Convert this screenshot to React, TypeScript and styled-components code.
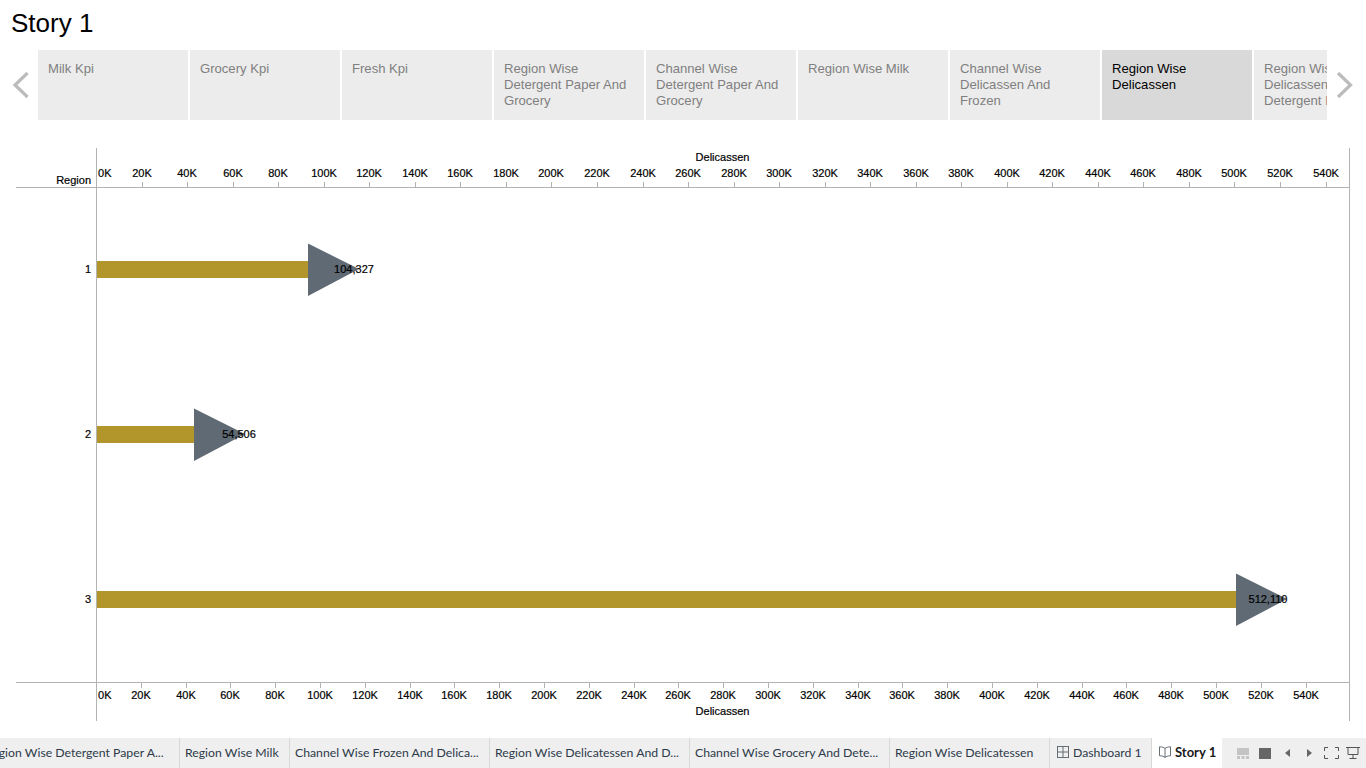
import React from 'react'
import styled, { createGlobalStyle } from 'styled-components'

const GlobalStyle = createGlobalStyle`
  html, body {
    margin: 0;
    padding: 0;
    background: #fff;
    overflow: hidden;
  }
`

const Page = styled.div`
  width: 1366px;
  height: 768px;
  display: flex;
  flex-direction: column;
  font-family: "Liberation Sans", Arial, sans-serif;
  overflow: hidden;
`

const Title = styled.h1`
  margin: 0;
  padding: 8px 0 0 11px;
  height: 50px;
  box-sizing: border-box;
  font-size: 26px;
  line-height: 30px;
  font-weight: 400;
  color: #000;
`

const Navigator = styled.div`
  display: flex;
  align-items: center;
  height: 70px;
  flex: none;
`

const ArrowIcon = styled.svg`
  display: block;
  flex: none;
  fill: none;
  stroke: #bcbcbc;
  stroke-width: 3.2;
`

const PointStrip = styled.div`
  display: flex;
  gap: 2px;
  width: 1289px;
  overflow: hidden;
  flex: none;
`

const Point = styled.div<{ $active?: boolean }>`
  width: 150px;
  height: 70px;
  flex: none;
  box-sizing: border-box;
  padding: 11px 10px 0;
  font-size: 13.1px;
  line-height: 16px;
  background: ${props => (props.$active ? '#d9d9d9' : '#ececec')};
  color: ${props => (props.$active ? '#000' : '#7f7f7f')};
`

const Chart = styled.svg`
  display: block;
  width: 1366px;
  height: 590px;
  margin-top: 28px;
  flex: none;
`

const AxisLine = styled.line`
  stroke: #b3b3b3;
  stroke-width: 1;
`

const ChartLabel = styled.text`
  font-family: "Liberation Sans", Arial, sans-serif;
  font-size: 11px;
  fill: #000;
  stroke: #000;
  stroke-width: 0.2;
`

const TabBar = styled.div`
  display: flex;
  height: 30px;
  background: #efefef;
  flex: none;
  overflow: hidden;
  font-family: Lato, "Open Sans", sans-serif;
  color: #2d3a4a;
`

const Tabs = styled.div`
  display: flex;
  width: 1222px;
  flex: none;
  justify-content: flex-end;
  overflow: hidden;
`

const Tab = styled.div<{ $width: number; $active?: boolean }>`
  width: ${props => props.$width}px;
  flex: none;
  box-sizing: border-box;
  display: flex;
  align-items: center;
  gap: 4px;
  padding: 0 5px 2px;
  white-space: nowrap;
  border-right: 1px solid ${props => (props.$active ? '#fff' : '#d8d8d8')};
  background: ${props => (props.$active ? '#fff' : 'transparent')};
  font-weight: ${props => (props.$active ? 700 : 400)};
  font-size: ${props => (props.$active ? '13px' : '12.25px')};
  color: ${props => (props.$active ? '#1a1a1a' : '#2d3a4a')};
`

const TabIcon = styled.svg`
  display: block;
  flex: none;
  margin-left: 2px;
  fill: none;
  stroke: #666e76;
`

const ViewControls = styled.div`
  display: flex;
  align-items: center;
  padding-left: 15px;
  flex: 1;
`

const Control = styled.svg<{ $gap?: number }>`
  display: block;
  flex: none;
  margin-left: ${props => props.$gap || 0}px;
`

const tabs = [
  { label: 'Region Wise Detergent Paper A...', width: 200 },
  { label: 'Region Wise Milk', width: 110 },
  { label: 'Channel Wise Frozen And Delica...', width: 200 },
  { label: 'Region Wise Delicatessen And D...', width: 200 },
  { label: 'Channel Wise Grocery And Dete...', width: 200 },
  { label: 'Region Wise Delicatessen', width: 160 }
]

const points = [
  'Milk Kpi',
  'Grocery Kpi',
  'Fresh Kpi',
  'Region Wise Detergent Paper And Grocery',
  'Channel Wise Detergent Paper And Grocery',
  'Region Wise Milk',
  'Channel Wise Delicassen And Frozen',
  'Region Wise Delicassen',
  'Region Wise Delicassen And Detergent Paper'
]

const ticks = Array.from({ length: 28 }, (_, i) => i)

const rows = [
  { region: '1', y: 269, baseX: 308, value: '104,327', labelX: 354 },
  { region: '2', y: 434, baseX: 194, value: '54,506', labelX: 239 },
  { region: '3', y: 599, baseX: 1236, value: '512,110', labelX: 1268 }
]

// viewBox starts at y=148 so the chart can use page coordinates
const StoryChart: React.FC = () => (
  <Chart viewBox="0 148 1366 590">
    <AxisLine x1={96.5} y1={148} x2={96.5} y2={721} />
    <AxisLine x1={1349.5} y1={148} x2={1349.5} y2={721} />
    <AxisLine x1={16} y1={187.5} x2={1350} y2={187.5} />
    <AxisLine x1={16} y1={682.5} x2={1350} y2={682.5} />

    <ChartLabel x={722.5} y={161} textAnchor="middle">Delicassen</ChartLabel>
    <ChartLabel x={722.5} y={715} textAnchor="middle">Delicassen</ChartLabel>
    <ChartLabel x={91} y={184} textAnchor="end">Region</ChartLabel>

    {ticks.map(i => {
      const topX = Math.floor(96.6 + i * 45.535)
      const bottomX = Math.floor(96.5 + i * 44.8)
      return (
        <g key={i}>
          {i > 0 && <AxisLine x1={topX + 0.5} y1={182} x2={topX + 0.5} y2={187} />}
          {i > 0 && <AxisLine x1={bottomX + 0.5} y1={683} x2={bottomX + 0.5} y2={688} />}
          <ChartLabel x={i === 0 ? 98 : topX} y={177} textAnchor={i === 0 ? 'start' : 'middle'}>{i * 20}K</ChartLabel>
          <ChartLabel x={i === 0 ? 98 : bottomX} y={699} textAnchor={i === 0 ? 'start' : 'middle'}>{i * 20}K</ChartLabel>
        </g>
      )
    })}

    {rows.map(r => (
      <g key={r.region}>
        <ChartLabel x={91} y={r.y + 4} textAnchor="end">{r.region}</ChartLabel>
        <rect x={97} y={r.y - 8} width={r.baseX - 97} height={17} fill="#b2962c" />
        <polygon
          points={`${r.baseX},${r.y - 25.5} ${r.baseX + 51},${r.y} ${r.baseX},${r.y + 27}`}
          fill="#5f6a74"
        />
        <ChartLabel x={r.labelX} y={r.y + 4} textAnchor="middle">{r.value}</ChartLabel>
      </g>
    ))}
  </Chart>
)

const App: React.FC = () => (
  <Page>
    <GlobalStyle />
    <Title>Story 1</Title>
    <Navigator>
      <ArrowIcon width="38" height="70" viewBox="0 0 38 70">
        <path d="M27.5 23 L15 35 L27.5 47" />
      </ArrowIcon>
      <PointStrip>
        {points.map((p, i) => (
          <Point key={p} $active={i === 7}>{p}</Point>
        ))}
      </PointStrip>
      <ArrowIcon width="39" height="70" viewBox="0 0 39 70">
        <path d="M11 23 L23.5 35 L11 47" />
      </ArrowIcon>
    </Navigator>
    <StoryChart />
    <TabBar>
      <Tabs>
        {tabs.map(t => (
          <Tab key={t.label} $width={t.width}>{t.label}</Tab>
        ))}
        <Tab $width={102}>
          <TabIcon width="12" height="12" viewBox="0 0 12 12">
            <rect x="0.5" y="0.5" width="11" height="11" />
            <path d="M6 0.5v11M0.5 6h11" />
          </TabIcon>
          Dashboard 1
        </Tab>
        <Tab $width={70} $active>
          <TabIcon width="12" height="12" viewBox="0 0 12 12">
            <path d="M6 2.5C5 1.5 3 .8 .5 .8v9c2.5 0 4.5 .7 5.5 1.7 1-1 3-1.7 5.5-1.7v-9C9 .8 7 1.5 6 2.5zM6 2.5v9" />
          </TabIcon>
          Story 1
        </Tab>
      </Tabs>
      <ViewControls>
        <Control width="12" height="11" viewBox="0 0 12 11" fill="#c4c4c4">
          <rect x="0" y="0" width="12" height="7" />
          <rect x="0" y="8" width="3" height="3" />
          <rect x="4.5" y="8" width="3" height="3" />
          <rect x="9" y="8" width="3" height="3" />
        </Control>
        <Control $gap={10} width="12" height="11" viewBox="0 0 12 11" fill="#666">
          <rect x="0" y="0" width="12" height="11" />
        </Control>
        <Control $gap={14} width="5" height="8" viewBox="0 0 5 8" fill="#666">
          <path d="M5 0v8L0 4z" />
        </Control>
        <Control $gap={17} width="5" height="8" viewBox="0 0 5 8" fill="#666">
          <path d="M0 0v8l5-4z" />
        </Control>
        <Control $gap={12} width="15" height="12" viewBox="0 0 15 12" fill="none" stroke="#555">
          <path d="M.5 4V.5H4M11 .5h3.5V4M14.5 8v3.5H11M4 11.5H.5V8" />
        </Control>
        <Control $gap={7} width="14" height="14" viewBox="0 0 14 14" fill="none" stroke="#555">
          <path d="M0 1.5h14M2 1.5v7h10v-7M7 8.5v3.500M3.5 12.500h7" />
        </Control>
      </ViewControls>
    </TabBar>
  </Page>
)

export default App
